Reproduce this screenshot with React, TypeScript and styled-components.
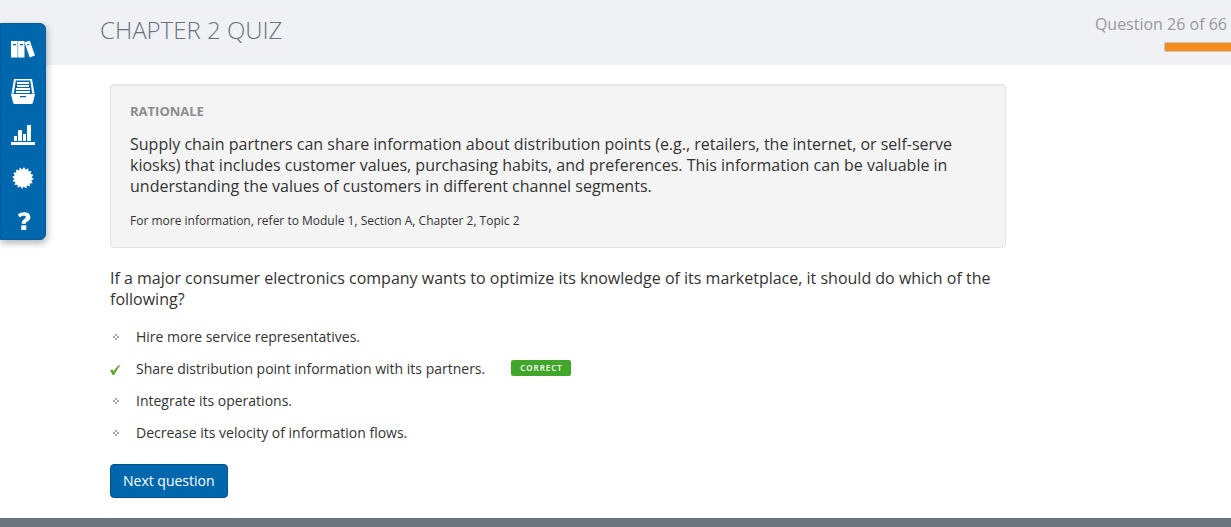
import React from "react";
import styled, { createGlobalStyle } from "styled-components";

const GlobalStyle = createGlobalStyle`
  * { box-sizing: border-box; }
  body {
    margin: 0;
    background: #fff;
    color: #333;
    font-family: "Open Sans", "Liberation Sans", sans-serif;
    font-size: 16px;
    line-height: 21px;
    overflow-x: hidden;
  }
  h1, h2, p, ul { margin: 0; padding: 0; }
`;

const Header = styled.header`
  display: flex;
  justify-content: space-between;
  height: 65px;
  padding-left: 100px;
  background: #eff1f5;
`;

const Title = styled.h1`
  padding-top: 13px;
  color: #68737d;
  font-size: 24px;
  font-weight: 300;
  line-height: 33px;
  text-transform: uppercase;
`;

const Status = styled.div`
  display: flex;
  flex-direction: column;
  align-items: flex-end;
  gap: 7px;
  padding-top: 14px;
`;

const Counter = styled.p`
  padding-right: 4px;
  color: #999;
`;

const Progress = styled.div`
  width: 67px;
  height: 10px;
  border: 1px solid #c9c8c2;
  border-right: 0;
  border-radius: 2px 0 0 2px;
  background: #f68e1f;
`;

const SideNav = styled.nav`
  position: absolute;
  top: 23px;
  left: 0;
  display: flex;
  flex-direction: column;
  width: 46px;
  padding-top: 3px;
  border: 1px solid #005c9e;
  border-radius: 0 6px 6px 0;
  background: #0067ac;
  box-shadow: 1px 3px 7px rgba(0, 0, 0, 0.3);
`;

const NavLink = styled.a`
  display: flex;
  align-items: center;
  justify-content: center;
  height: 43px;
  color: #fff;
  &:last-child {
    height: 40px;
    padding: 4px 0 0 2px;
  }
  svg { display: block; fill: currentColor; }
`;

const Main = styled.main`
  max-width: 1006px;
  padding: 19px 0 20px 110px;
`;

const Rationale = styled.section`
  padding: 17px 19px;
  border: 1px solid #e2e2e2;
  border-radius: 4px;
  background: #f4f4f4;
  box-shadow: inset 0 1px 1px rgba(0, 0, 0, 0.05);
`;

const RationaleTitle = styled.h2`
  margin-bottom: 14px;
  color: #8c8c8c;
  font-size: 13px;
  font-weight: 700;
  line-height: 18px;
  text-transform: uppercase;
`;

const Reference = styled.p`
  margin-top: 15px;
  font-size: 12px;
  line-height: 18px;
`;

const Question = styled.p`
  margin-top: 20px;
`;

const Answers = styled.ul`
  margin-top: 10px;
  list-style: none;
`;

const Answer = styled.li`
  display: flex;
  align-items: center;
  height: 32px;
  font-size: 14px;
`;

const Marker = styled.span`
  display: flex;
  justify-content: center;
  width: 12px;
  margin-right: 14px;
  padding-top: 2px;
  svg { display: block; }
`;

const Badge = styled.span`
  margin-left: 26px;
  padding: 0 8px 0 9px;
  border-radius: 2px;
  background: #42a62a;
  color: #fff;
  font-size: 8px;
  font-weight: 600;
  line-height: 16px;
  letter-spacing: 1px;
  text-transform: uppercase;
`;

const NextButton = styled.button`
  display: block;
  height: 34px;
  margin-top: 16px;
  padding: 0 12px;
  border: 1px solid #00508a;
  border-radius: 4px;
  background: #0067ac;
  color: #fff;
  font: 500 14px/20px "Open Sans", "Liberation Sans", sans-serif;
  cursor: pointer;
`;

const Footer = styled.footer`
  height: 9px;
  background: #6a747c;
`;

const BooksIcon = () => (
  <svg width="24" height="18" viewBox="0 0 24 18">
    <path fillRule="evenodd" d="M0 1h6.600v16.500H0zM2 4v1.200h3V4zM7.100 1h6.400v16.500H7.100zM9 4v1.200h3V4z" />
    <path fillRule="evenodd" d="M13.500 2.300 18.800.7l5.200 14.800-5.300 2zM15.700 4.500l.4 1.100 2.500-.8-.4-1.100z" />
  </svg>
);

const DrawerIcon = () => (
  <svg width="24" height="25" viewBox="0 0 24 25">
    <path fillRule="evenodd" d="M3 0h18l2.500 14.500H.5zM4.800 1.500 2.800 14.500h18.400l-2-13z" />
    <path d="M6 3h12v2H6zM6 6h12v2H6zM5 9h14v2H5zM5 12h14v2H5z" />
    <path fillRule="evenodd" d="M0 15h24l-2 8.500q-.4 1.500-2 1.500H4q-1.600 0-2-1.500zM9 17v1.200h6V17z" />
  </svg>
);

const ChartIcon = () => (
  <svg width="24" height="20" viewBox="0 0 24 20">
    <path d="M3 11h3v5H3zM7 5h4v11H7zM12 9h3v7h-3zM16 0h4v16h-4zM0 17h24v3H0z" />
  </svg>
);

const sealPoints = Array.from({ length: 32 }, (_, i) => {
  const radius = i % 2 ? 8.6 : 11;
  const angle = ((i + 0.5) * Math.PI) / 16;
  return `${11 + radius * Math.cos(angle)},${11 + radius * Math.sin(angle)}`;
}).join(" ");

const SealIcon = () => (
  <svg width="22" height="22" viewBox="0 0 22 22">
    <polygon points={sealPoints} />
  </svg>
);

const HelpIcon = () => (
  <svg width="14" height="18" viewBox="0 0 14 18">
    <path d="M.8 2.500C2.600 1 4.600.2 7.100.2c3.800 0 6.200 1.700 6.200 4.700 0 2.300-1.100 3.500-2.800 4.700-1.300.9-1.600 1.200-1.600 2.200H4.700c0-2.400.6-3.400 2.300-4.600 1.300-.9 1.800-1.300 1.800-2.100 0-.9-.7-1.400-1.900-1.400-1.500 0-3 .6-4.400 1.500z" />
    <path d="M4.300 13.300h5V18h-5z" />
  </svg>
);

const DotsIcon = () => (
  <svg width="6" height="6" viewBox="0 0 6 6" fill="#aaa">
    <path d="M2 0h2v2H2zM0 2h2v2H0zM4 2h2v2H4zM2 4h2v2H2z" />
  </svg>
);

const CheckIcon = () => (
  <svg width="12" height="12" viewBox="0 0 12 12" fill="#62a52a">
    <path d="M0 7.500 2.300 6.200l1.500 2.100Q6 4.300 8.500 2.400 9.300 2 10.500 2 7 6 4.500 11.500q-.8.500-2 .5Q1.500 9.500 0 7.500z" />
  </svg>
);

const navItems = [
  { label: "Library", Icon: BooksIcon },
  { label: "Documents", Icon: DrawerIcon },
  { label: "Reports", Icon: ChartIcon },
  { label: "Achievements", Icon: SealIcon },
  { label: "Help", Icon: HelpIcon },
];

const answers = [
  { text: "Hire more service representatives.", correct: false },
  { text: "Share distribution point information with its partners.", correct: true },
  { text: "Integrate its operations.", correct: false },
  { text: "Decrease its velocity of information flows.", correct: false },
];

export default function App() {
  return (
    <>
      <GlobalStyle />
      <Header>
        <Title>Chapter 2 Quiz</Title>
        <Status>
          <Counter>Question 26 of 66</Counter>
          <Progress role="progressbar" aria-label="Quiz progress" aria-valuemin={0} aria-valuemax={66} aria-valuenow={26} />
        </Status>
      </Header>
      <SideNav aria-label="Course">
        {navItems.map(({ label, Icon }) => (
          <NavLink key={label} href="#" aria-label={label}>
            <Icon />
          </NavLink>
        ))}
      </SideNav>
      <Main>
        <Rationale>
          <RationaleTitle>Rationale</RationaleTitle>
          <p>
            Supply chain partners can share information about distribution points (e.g., retailers, the internet, or
            self-serve kiosks) that includes customer values, purchasing habits, and preferences. This information can
            be valuable in understanding the values of customers in different channel segments.
          </p>
          <Reference>For more information, refer to Module 1, Section A, Chapter 2, Topic 2</Reference>
        </Rationale>
        <Question>
          If a major consumer electronics company wants to optimize its knowledge of its marketplace, it should do which
          of the following?
        </Question>
        <Answers>
          {answers.map(({ text, correct }) => (
            <Answer key={text}>
              <Marker>{correct ? <CheckIcon /> : <DotsIcon />}</Marker>
              {text}
              {correct && <Badge>Correct</Badge>}
            </Answer>
          ))}
        </Answers>
        <NextButton type="button">Next question</NextButton>
      </Main>
      <Footer />
    </>
  );
}
